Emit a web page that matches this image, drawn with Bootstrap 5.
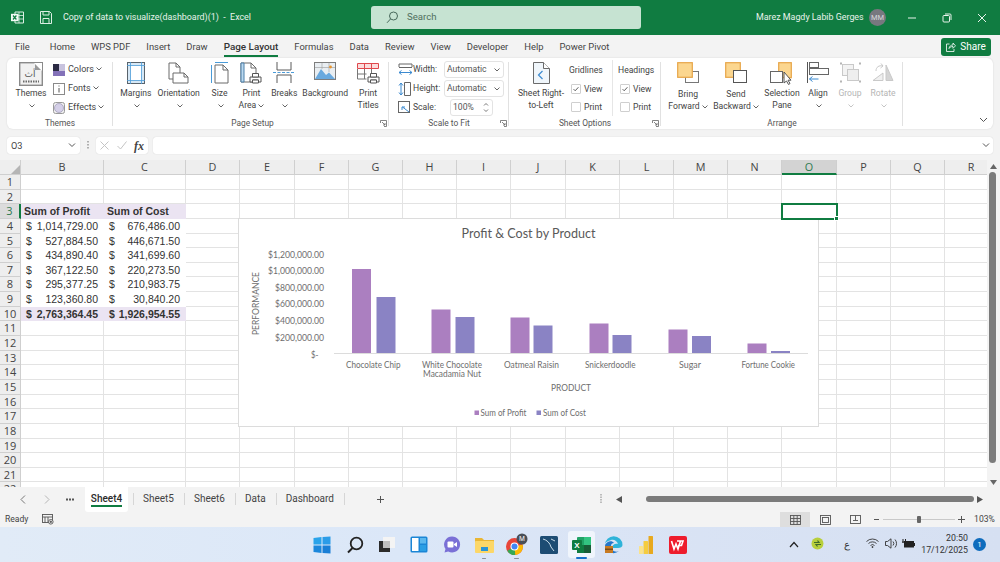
<!DOCTYPE html>
<html lang="en">
<head>
<meta charset="UTF-8" />
<meta name="viewport" content="width=device-width, initial-scale=1" />
<title>Copy of data to visualize(dashboard)(1) - Excel</title>
<link href="https://cdn.jsdelivr.net/npm/bootstrap@5.3.0/dist/css/bootstrap.min.css" rel="stylesheet" />
<style>
  html, body { height: 100%; margin: 0; overflow: hidden; }
  body { width: 1000px; height: 562px; background: #f3f3f3; font-family: Roboto, "Noto Sans", sans-serif; font-size: 8.6px; color: #444; }
  svg { display: block; flex: none; }

  /* title bar */
  .title-bar { height: 35px; background: #107c41; color: #e8f3ec; font-size: 8.9px; flex: none; }
  .title-app { margin-left: 11px; }
  .title-save { margin-left: 16px; }
  .title-name { margin-left: 11px; width: 308px; white-space: nowrap; }
  .title-search { width: 270px; height: 23px; background: #c6e3d2; border-radius: 3px; color: #4f6f5d; font-size: 9.6px; padding-left: 15px; gap: 8px; }
  .title-user { margin-left: 115px; width: 104px; white-space: nowrap; }
  .title-avatar { width: 17px; height: 17px; border-radius: 50%; background: #77787f; color: #d8d8dc; font-size: 7.5px; margin-left: 9px; }
  .title-ctrl { width: 35px; margin-left: 0; }
  .title-ctrl.first { margin-left: 8px; }

  /* menu row */
  .menu-row { height: 23px; flex: none; padding-left: 15px; gap: 16px; color: #444; font-size: 9.4px; position: relative; }
  .menu-tab { color: #444; text-decoration: none; line-height: 21px; height: 21px; white-space: nowrap; }
  .menu-tab.active { color: #333; font-size: 9.9px; font-weight: 500; border-bottom: 2px solid #107c41; }
  .menu-share { margin-left: auto; margin-right: 9px; width: 50px; height: 18px; background: #107c41; color: #fff; border-radius: 3px; font-size: 10px; padding: 0; gap: 4px; border: 0; }
  .menu-share:hover { background: #107c41; color: #fff; }

  /* ribbon */
  .ribbon-box { height: 71px; margin: 0 7px; background: #fff; border-radius: 6px; padding-top: 2px; flex: none; box-shadow: 0 0 2px rgba(0,0,0,.12); position: relative; }
  .rb-group { height: 69px; position: relative; flex: none; }
  .rb-group::after { content: ""; position: absolute; right: 0; top: 2px; bottom: 3px; width: 1px; background: #e1e1e1; }
  .rb-body { height: 57px; }
  .rb-label { height: 12px; line-height: 12px; text-align: center; color: #555; font-size: 8.4px; white-space: nowrap; }
  .rb-launch { position: absolute; right: 2px; bottom: 2px; }
  .grp-themes { width: 106px; }
  .grp-page { width: 276px; padding-left: 3px; }
  .grp-scale { width: 120px; }
  .grp-sheet { width: 152px; }
  .grp-arrange { width: 242px; }
  .rb-big { padding-top: 2px; line-height: 12px; text-align: center; white-space: nowrap; color: #444; }
  .rb-big .rb-icon { height: 24px; margin-bottom: 1px; }
  .rb-big.lower .rb-icon { margin-bottom: 2px; }
  .rb-off { color: #b5b5b5; }
  .bw-28 { width: 28px; } .bw-30 { width: 30px; } .bw-36 { width: 36px; } .bw-38 { width: 38px; } .bw-40 { width: 40px; }
  .bw-42 { width: 42px; } .bw-44 { width: 44px; } .bw-46 { width: 46px; } .bw-48 { width: 48px; }
  .rb-lead { margin-left: 7px; width: 34px; }
  .rb-small-col { margin-left: 5px; }
  .rb-small { height: 19px; gap: 3px; white-space: nowrap; font-size: 9px; }
  .rb-chev { display: inline-block; vertical-align: middle; margin-left: 2px; }
  .rb-chev-line { height: 12px; }
  .scale-col { padding-left: 9px; }
  .scale-row { height: 19px; gap: 0; white-space: nowrap; }
  .scale-name { width: 31px; }
  .scale-ico { width: 15px; }
  .scale-box { width: 60px; height: 17px; border: 1px solid #e3e3e3; border-radius: 3px; padding: 0 3px 0 2px; color: #555; }
  .scale-pct { width: 43px; margin-left: 6px; padding-left: 2px; }
  .sheet-lead { margin-left: 7px; width: 50px; }
  .opt-col { padding-top: 1px; }
  .opt-col.c1 { width: 41px; margin-left: 5px; }
  .opt-col.c2 { width: 46px; height: 56px; padding-left: 7px; border-left: 1px solid #e6e6e6; }
  .opt-head { height: 19px; line-height: 19px; margin-left: -2px; white-space: nowrap; }
  .opt-row { height: 18px; gap: 3px; white-space: nowrap; }
  .opt-row .form-check-input { width: 10px; height: 10px; margin: 0; border: 1px solid #cfcfcf; border-radius: 1px; background-color: #fff; box-shadow: none; flex: none; float: none; }
  .opt-row .form-check-input:checked { background-color: #fff; border-color: #cfcfcf; background-size: 8px; background-image: url("data:image/svg+xml,%3csvg xmlns='http://www.w3.org/2000/svg' viewBox='0 0 10 10'%3e%3cpath fill='none' stroke='%23555' stroke-width='1.2' d='M2 5.2l2 2 4-4.4'/%3e%3c/svg%3e"); }
  .opt-row label { margin: 0; }
  .arr-lead { margin-left: 3px; }
  .rb-collapse { position: absolute; right: 5px; bottom: 6px; }

  /* formula bar */
  .formula-row { height: 17px; margin: 8px 7px 6px; flex: none; }
  .fx-name { width: 73px; height: 17px; background: #fff; border-radius: 3px; padding: 0 4px; color: #444; font-size: 9.2px; box-shadow: 0 0 1px rgba(0,0,0,.2); }
  .fx-dots { width: 16px; }
  .fx-btns { width: 52px; height: 17px; background: #fff; border-radius: 3px; padding: 0 4px; box-shadow: 0 0 1px rgba(0,0,0,.2); }
  .fx-input { margin-left: 5px; height: 17px; background: #fff; border-radius: 3px; flex: 1; padding-right: 3px; box-shadow: 0 0 1px rgba(0,0,0,.2); }
  .fx-sym { font-family: "Liberation Serif", serif; font-style: italic; font-size: 12px; color: #444; font-weight: 700; }

  /* sheet */
  .sheet-wrap { height: 327px; flex: none; position: relative; overflow: hidden; }
  .sheet-grid { display: grid; width: 998px; background: #fff; font-family: "Liberation Sans", Arial, sans-serif; font-size: 10.5px; color: #333;
    grid-template-columns: 21px 83px 82px 54px 55px 54px 54px 54px 54px 55px 54px 54px 54px 54px 55px 54px 54px 53px;
    grid-template-rows: 15px; grid-auto-rows: 14.65px; }
  .cel { border-right: 1px solid #e3e3e3; border-bottom: 1px solid #e3e3e3; position: relative; line-height: 15px; white-space: nowrap; }
  .cel-head { background: #eee; border-color: #cfcfcf; text-align: center; color: #444; font-family: "Open Sans", sans-serif; font-size: 10.8px; line-height: 14px; }
  .cel-head.row-no { font-size: 11px; color: #444; line-height: 14px; }
  .cel-head.on { background: #d3d3d3; color: #2f7a50; border-bottom: 2px solid #107c41; }
  .cel-head.row-on { background: #dcdcdc; color: #2f7a50; border-bottom-color: #cfcfcf; border-right: 2px solid #107c41; }
  .cel-corner { background: #eee; border-right: 1px solid #cfcfcf; border-bottom: 1px solid #cfcfcf; }
  .cel-pivot { background: #ebe4f2; font-weight: 700; border-color: #ebe4f2; padding-left: 3px; }
  .cel-acc { border-color: #fff; padding: 0 5px; }
  .cel-total { background: #ebe4f2; font-weight: 700; border-color: #ebe4f2; padding: 0 5px; }
  .cel-sel { outline: 2px solid #107c41; outline-offset: -1px; z-index: 3; }
  .cel-sel::after { content: ""; position: absolute; right: -3px; bottom: -3px; width: 5px; height: 5px; background: #107c41; border: 1px solid #fff; }
  .chart-box { position: absolute; left: 238px; top: 58px; width: 581px; height: 209px; background: #fff; border: 1px solid #dcdcdc; z-index: 2; }
  .chart-box text { font-family: Lato, "Open Sans", sans-serif; fill: #6e6e6e; font-size: 9.4px; }
  .chart-box text.ch-title { font-size: 13.5px; fill: #595959; }
  .chart-box text.ch-axis { font-size: 10px; }
  .vscroll { position: absolute; right: 0; top: 0; width: 13px; height: 327px; background: #f3f3f3; }
  .vscroll-up { position: absolute; left: 3px; top: 4px; }
  .vscroll-thumb { position: absolute; left: 2px; top: 12px; width: 7px; height: 291px; background: #7b7b7b; border-radius: 4px; }
  .vscroll-down { position: absolute; left: 3px; top: 320px; }

  /* sheet tabs */
  .tabs-row { height: 25px; flex: none; background: #f3f3f3; color: #444; font-size: 10px; position: relative; }
  .tab-nav { width: 24px; }
  .tab-nav.first { margin-left: 11px; }
  .tab-dots { width: 22px; }
  .tab-sheet { height: 25px; line-height: 24px; padding: 0 10px; white-space: nowrap; position: relative; }
  .tab-sheet + .tab-sheet::before { content: ""; position: absolute; left: 0; top: 6px; height: 12px; width: 1px; background: #d6d6d6; }
  .tab-on { background: #fff; font-weight: 500; color: #2b2b2b; padding: 0; margin: -1px 5px 0 4px; border-radius: 0 0 3px 3px; width: 43px; text-align: center; }
  .tab-on::after { content: ""; position: absolute; left: 6px; right: 6px; bottom: 5px; height: 2px; background: #107c41; }
  .tab-last { padding: 0; width: 1px; }
  .tab-plus { margin-left: 31px; }
  .hscroll { position: absolute; left: 598px; top: 0; right: 0; height: 25px; }
  .hscroll-thumb { position: absolute; left: 48px; top: 9px; width: 328px; height: 6px; border-radius: 3px; background: #7b7b7b; }
  .hs-dots { position: absolute; left: 2px; top: 7px; }
  .hs-left { position: absolute; left: 18px; top: 9px; }
  .hs-right { position: absolute; left: 379px; top: 9px; }

  /* status bar */
  .status-row { height: 15px; flex: none; background: #f3f3f3; border-top: 1px solid #e2e2e2; padding-left: 5px; font-size: 8.6px; color: #444; box-sizing: content-box; margin-top: -1px; }
  .status-macro { margin-left: 14px; }
  .status-view { width: 30px; height: 15px; }
  .status-view.on { background: #dedede; }
  .status-views { margin-left: auto; margin-right: 3px; }
  .status-zoom { width: 92px; gap: 3px; }
  .zoom-track { flex: 1; height: 1px; background: #c9c9c9; position: relative; }
  .zoom-thumb { position: absolute; left: 34px; top: -3px; width: 4px; height: 7px; background: #666; border-radius: 1px; }
  .status-pct { width: 35px; padding-left: 4px; text-align: center; font-size: 8.6px; }

  /* taskbar */
  .task-bar { height: 35px; flex: none; background: linear-gradient(90deg, #e1ebf7 0%, #dbe7f8 40%, #dae4f5 60%, #d6e0f2 100%); position: relative; }
  .task-apps { position: absolute; left: 0; top: 0; bottom: 0; width: 100%; padding-left: 306px; }
  .task-app { width: 32.4px; height: 35px; position: relative; }
  .task-app.on::before { content: ""; position: absolute; left: 3px; right: 3px; top: 4px; height: 27px; background: #f0f5fc; border-radius: 3px; }
  .task-app svg { position: relative; }
  .task-app.on::after { content: ""; position: absolute; left: 11px; right: 11px; bottom: 3px; height: 2px; background: #1670c9; border-radius: 1px; }
  .task-app.dot::after { content: ""; position: absolute; left: 14px; right: 14px; bottom: 3px; height: 1.5px; background: #8a8f98; border-radius: 1px; }
  .task-tray { position: absolute; left: 0; top: 0; bottom: 0; width: 100%; color: #333; }
  .tray-chev { position: absolute; left: 789px; top: 14px; }
  .tray-sync { position: absolute; left: 811px; top: 10px; }
  .tray-lang { position: absolute; left: 844px; top: 10px; font-size: 10px; }
  .tray-wifi { position: absolute; left: 866px; top: 11px; }
  .tray-vol { position: absolute; left: 885px; top: 11px; }
  .tray-bat { position: absolute; left: 902px; top: 12px; }
  .tray-clock { position: absolute; right: 32px; top: 5px; text-align: right; line-height: 12px; font-size: 8.8px; }
  .tray-badge { position: absolute; left: 973px; top: 11px; width: 13px; height: 13px; border-radius: 50%; background: #0f6cbd; color: #fff; font-size: 8px; line-height: 13px; text-align: center; }
</style>
</head>
<body class="d-flex flex-column">

  <!-- title bar -->
  <header class="title-bar d-flex align-items-center">
    <svg class="title-app" width="13" height="13" viewBox="0 0 13 13"><path d="M4 1h8.500v11H4z" fill="none" stroke="#dcefe4"/><path d="M8 1v11M4 4.500h8.500M4 8h8.500" stroke="#dcefe4" stroke-width=".8"/><path d="M0 2.800h7.500v7.400H0z" fill="#f4faf6"/><path d="M2 4.500l3.400 4M5.400 4.500L2 8.500" stroke="#107c41" stroke-width="1.200"/></svg>
    <svg class="title-save" width="12" height="13" viewBox="0 0 12 13" fill="none" stroke="#dcefe4"><path d="M.5.500h9l2 2v10h-11z"/><path d="M3 .500v3.500h6V.500M3 12.500V7.500h6v5"/></svg>
    <div class="title-name">Copy of data to visualize(dashboard)(1)&nbsp; -&nbsp; Excel</div>
    <div class="title-search d-flex align-items-center">
      <svg width="13" height="13" viewBox="0 0 13 13" fill="none" stroke="#47685a" stroke-width="1"><circle cx="7.500" cy="5" r="4"/><path d="M4.500 8l-3.500 3.800"/></svg>
      <span>Search</span>
    </div>
    <div class="title-user">Marez Magdy Labib Gerges</div>
    <div class="title-avatar d-flex align-items-center justify-content-center">MM</div>
    <div class="title-ctrl first d-flex justify-content-center"><svg width="10" height="10" viewBox="0 0 10 10"><path d="M1 5h8" stroke="#e8f3ec"/></svg></div>
    <div class="title-ctrl d-flex justify-content-center"><svg width="10" height="10" viewBox="0 0 10 10" fill="none" stroke="#e8f3ec"><rect x="1" y="2.500" width="6.500" height="6.500" rx="1"/><path d="M3 1h5a1 1 0 0 1 1 1v5"/></svg></div>
    <div class="title-ctrl d-flex justify-content-center"><svg width="10" height="10" viewBox="0 0 10 10"><path d="M1 1l8 8M9 1l-8 8" stroke="#e8f3ec"/></svg></div>
  </header>

  <!-- menu tabs -->
  <nav class="menu-row d-flex align-items-center">
    <a class="menu-tab me-1" href="#">File</a>
    <a class="menu-tab" href="#">Home</a>
    <a class="menu-tab" href="#">WPS PDF</a>
    <a class="menu-tab" href="#">Insert</a>
    <a class="menu-tab" href="#">Draw</a>
    <a class="menu-tab active" href="#">Page Layout</a>
    <a class="menu-tab" href="#">Formulas</a>
    <a class="menu-tab" href="#">Data</a>
    <a class="menu-tab" href="#">Review</a>
    <a class="menu-tab" href="#">View</a>
    <a class="menu-tab" href="#">Developer</a>
    <a class="menu-tab" href="#">Help</a>
    <a class="menu-tab" href="#">Power Pivot</a>
    <button type="button" class="btn menu-share d-flex align-items-center justify-content-center">
      <svg width="10" height="10" viewBox="0 0 10 10" fill="none" stroke="#fff" stroke-width=".8"><path d="M3.500 2H.5v7.500h7.500V7"/><path d="M3 6.500C3.500 4 5 3 7 3V1l2.500 2.800L7 6.300V4.500C5 4.500 4 5.200 3 6.500z"/></svg>
      <span>Share</span>
    </button>
  </nav>

  <!-- ribbon -->
  <section class="ribbon-box d-flex">
    <div class="rb-group grp-themes">
      <div class="rb-body d-flex">
        <div class="rb-big rb-lead d-flex flex-column align-items-center">
          <div class="rb-icon">
            <svg width="24" height="24" viewBox="0 0 24 24"><rect x=".7" y=".7" width="22.600" height="22.600" fill="#f1f1f1" stroke="#8a8a8a" stroke-width="1.400"/><path d="M15 1h8v8z" fill="#fff"/><path d="M16 2l6 6h-6z" fill="#9a9a9a"/><text x="11" y="15" font-size="9" fill="#555" text-anchor="middle" font-family="DejaVu Sans">أث</text><path d="M4 19.500h16" stroke="#6a6a6a" stroke-width="2" stroke-dasharray="1.500 1"/></svg>
          </div>
          <div>Themes</div>
          <div class="rb-chev-line"><svg class="rb-chev" width="6" height="4" viewBox="0 0 6 4"><path d="M.5.500L3 3 5.500.500" fill="none" stroke="#666"/></svg></div>
        </div>
        <div class="rb-small-col">
          <div class="rb-small d-flex align-items-center">
            <svg width="12" height="12" viewBox="0 0 12 12"><rect width="6" height="7" fill="#2c2c44"/><rect x="6" width="6" height="7" fill="#c8c3de"/><rect y="7" width="12" height="5" fill="#8371b8"/></svg>
            <span>Colors<svg class="rb-chev d-inline" width="6" height="4" viewBox="0 0 6 4"><path d="M.5.500L3 3 5.500.500" fill="none" stroke="#666"/></svg></span>
          </div>
          <div class="rb-small d-flex align-items-center">
            <svg width="12" height="12" viewBox="0 0 12 12" fill="none" stroke="#8a8a8a"><rect x=".5" y=".5" width="11" height="11"/><path d="M6 2.500v1M6 5v4.500" stroke="#555"/></svg>
            <span>Fonts<svg class="rb-chev d-inline" width="6" height="4" viewBox="0 0 6 4"><path d="M.5.500L3 3 5.500.500" fill="none" stroke="#666"/></svg></span>
          </div>
          <div class="rb-small d-flex align-items-center">
            <svg width="12" height="12" viewBox="0 0 12 12"><rect x=".5" y=".5" width="11" height="11" rx="2" fill="#efefef" stroke="#9a9a9a"/><circle cx="6" cy="6" r="4.500" fill="#d4cfe8" stroke="#9c98b4" stroke-width=".7"/></svg>
            <span>Effects<svg class="rb-chev d-inline" width="6" height="4" viewBox="0 0 6 4"><path d="M.5.500L3 3 5.500.500" fill="none" stroke="#666"/></svg></span>
          </div>
        </div>
      </div>
      <div class="rb-label">Themes</div>
    </div>

    <div class="rb-group grp-page">
      <div class="rb-body d-flex">
        <div class="rb-big bw-40 d-flex flex-column align-items-center">
          <div class="rb-icon"><svg width="18" height="22" viewBox="0 0 18 22"><rect x=".5" y=".5" width="17" height="21" fill="#d6e8f6" stroke="#59636b"/><rect x="3.500" y="3.500" width="11" height="15" fill="#fff"/><path d="M3.500 0v22M14.500 0v22M0 3.500h18M0 18.500h18" stroke="#4a9bd8" stroke-width=".8"/></svg></div>
          <div>Margins</div>
          <div class="rb-chev-line"><svg class="rb-chev" width="6" height="4" viewBox="0 0 6 4"><path d="M.5.500L3 3 5.500.500" fill="none" stroke="#666"/></svg></div>
        </div>
        <div class="rb-big bw-46 d-flex flex-column align-items-center">
          <div class="rb-icon"><svg width="22" height="22" viewBox="0 0 22 22" fill="#fff" stroke="#6b6b6b"><path d="M1 1h7l4 4v12H1z"/><path d="M8 1v4h4" fill="none"/><path d="M5 11h11l4 4v6H5z"/><path d="M16 11v4h4" fill="none"/></svg></div>
          <div>Orientation</div>
          <div class="rb-chev-line"><svg class="rb-chev" width="6" height="4" viewBox="0 0 6 4"><path d="M.5.500L3 3 5.500.500" fill="none" stroke="#666"/></svg></div>
        </div>
        <div class="rb-big bw-36 d-flex flex-column align-items-center">
          <div class="rb-icon"><svg width="18" height="22" viewBox="0 0 18 22" fill="none"><path d="M4 3h8l5 5v13H4z" fill="#fff" stroke="#6b6b6b"/><path d="M12 3v5h5" stroke="#6b6b6b"/><path d="M.5 3v18M4 .5h13" stroke="#4a9bd8"/></svg></div>
          <div>Size</div>
          <div class="rb-chev-line"><svg class="rb-chev" width="6" height="4" viewBox="0 0 6 4"><path d="M.5.500L3 3 5.500.500" fill="none" stroke="#666"/></svg></div>
        </div>
        <div class="rb-big bw-28 d-flex flex-column align-items-center">
          <div class="rb-icon"><svg width="22" height="22" viewBox="0 0 22 22" fill="none"><path d="M1 1h10l5 5v14H1z" fill="#fff" stroke="#6b6b6b"/><path d="M1 1h3v19H1z" fill="#bcd9ef" stroke="#4a7fa8"/><path d="M11 1v5h5" stroke="#6b6b6b"/><path d="M10 15h11v5h-2.500v-2h-6v2H10z" fill="#fff" stroke="#555"/><path d="M12.500 11.500h6V15h-6zM12.500 18h6v3h-6z" fill="#fff" stroke="#555"/></svg></div>
          <div>Print</div>
          <div>Area<svg class="rb-chev d-inline" width="6" height="4" viewBox="0 0 6 4"><path d="M.5.500L3 3 5.500.500" fill="none" stroke="#666"/></svg></div>
        </div>
        <div class="rb-big bw-38 d-flex flex-column align-items-center">
          <div class="rb-icon"><svg width="22" height="22" viewBox="0 0 22 22" fill="none"><path d="M4 0v8h14V0M4 21v-8h14v8" stroke="#5b5b5b"/><path d="M0 10.500h22" stroke="#4a9bd8" stroke-dasharray="3 1.500"/></svg></div>
          <div>Breaks</div>
          <div class="rb-chev-line"><svg class="rb-chev" width="6" height="4" viewBox="0 0 6 4"><path d="M.5.500L3 3 5.500.500" fill="none" stroke="#666"/></svg></div>
        </div>
        <div class="rb-big bw-44 d-flex flex-column align-items-center">
          <div class="rb-icon"><svg width="22" height="19" viewBox="0 0 22 19"><rect x=".5" y=".5" width="21" height="17" fill="#e9eef2" stroke="#7d7d7d"/><path d="M1 17l6-10 5 6 3-2.500 6 6.500z" fill="#69a9de"/><path d="M1 5.500h20M8 1v6M15 1v9" stroke="#9a9a9a" stroke-width=".6"/><circle cx="16.500" cy="5" r="1.400" fill="#e9942c"/></svg></div>
          <div>Background</div>
        </div>
        <div class="rb-big bw-42 d-flex flex-column align-items-center">
          <div class="rb-icon"><svg width="23" height="22" viewBox="0 0 23 22" fill="none"><path d="M.5 1.500h21v5H.5z" fill="#fbdcdc" stroke="#e0474c"/><path d="M7.500 1.500v5M14.500 1.500v5" stroke="#e0474c"/><path d="M.5 7v10h9M.5 12h9M7.500 7v10M14.500 7v4" stroke="#777"/><path d="M11 15h11v5h-2.500v-2h-6v2H11z" fill="#fff" stroke="#555"/><path d="M13.500 11.500h6V15h-6zM13.500 18h6v3h-6z" fill="#fff" stroke="#555"/></svg></div>
          <div>Print</div>
          <div>Titles</div>
        </div>
      </div>
      <div class="rb-label">Page Setup</div>
      <svg class="rb-launch" width="7" height="7" viewBox="0 0 7 7" fill="none" stroke="#666" stroke-width=".8"><path d="M.5 3V.5h6v6H4M2 2l3 3M5 3v2H3"/></svg>
    </div>

    <div class="rb-group grp-scale">
      <div class="rb-body scale-col">
        <div class="scale-row d-flex align-items-center">
          <svg class="scale-ico" width="15" height="13" viewBox="0 0 15 13" fill="none"><path d="M1 4V1h13v3" stroke="#666"/><path d="M1 4.500h13" stroke="#666"/><path d="M1 9.500h13M1 9.500l2.500-2M1 9.500l2.500 2M14 9.500l-2.500-2M14 9.500l-2.500 2" stroke="#3b8ad0"/></svg>
          <span class="scale-name">Width:</span>
          <div class="scale-box d-flex align-items-center justify-content-between"><span>Automatic</span><svg width="6" height="4" viewBox="0 0 6 4"><path d="M.5.500L3 3 5.500.500" fill="none" stroke="#666"/></svg></div>
        </div>
        <div class="scale-row d-flex align-items-center">
          <svg class="scale-ico" width="15" height="14" viewBox="0 0 15 14" fill="none"><path d="M6.500.5h6v13h-6" stroke="#666"/><path d="M6.500.5v13" stroke="#666"/><path d="M3 1v12M3 1L1 3.500M3 1l2 2.500M3 13l-2-2.500M3 13l2-2.500" stroke="#3b8ad0"/></svg>
          <span class="scale-name">Height:</span>
          <div class="scale-box d-flex align-items-center justify-content-between"><span>Automatic</span><svg width="6" height="4" viewBox="0 0 6 4"><path d="M.5.500L3 3 5.500.500" fill="none" stroke="#666"/></svg></div>
        </div>
        <div class="scale-row d-flex align-items-center">
          <svg class="scale-ico" width="15" height="13" viewBox="0 0 15 13" fill="none"><rect x=".5" y=".5" width="11" height="11" stroke="#666"/><path d="M11 11L4.500 6M4 9V6h3" stroke="#3b8ad0"/></svg>
          <span class="scale-name">Scale:</span>
          <div class="scale-box scale-pct d-flex align-items-center justify-content-between"><span>100%</span><svg width="6" height="11" viewBox="0 0 6 11"><path d="M1 3.500L3 1.500l2 2M1 7.500l2 2 2-2" fill="none" stroke="#555" stroke-width=".8"/></svg></div>
        </div>
      </div>
      <div class="rb-label">Scale to Fit</div>
      <svg class="rb-launch" width="7" height="7" viewBox="0 0 7 7" fill="none" stroke="#666" stroke-width=".8"><path d="M.5 3V.5h6v6H4M2 2l3 3M5 3v2H3"/></svg>
    </div>

    <div class="rb-group grp-sheet">
      <div class="rb-body d-flex">
        <div class="rb-big sheet-lead d-flex flex-column align-items-center">
          <div class="rb-icon"><svg width="17" height="22" viewBox="0 0 17 22"><path d="M.5.500h10l6 6v15H.5z" fill="#f0f6fb" stroke="#6b6b6b"/><path d="M10.500.500v6h6" fill="#fff" stroke="#6b6b6b"/><path d="M9.500 9L5.500 13l4 4" fill="none" stroke="#3b8ad0" stroke-width="1.200"/></svg></div>
          <div>Sheet Right-</div>
          <div>to-Left</div>
        </div>
        <div class="opt-col c1">
          <div class="opt-head">Gridlines</div>
          <div class="opt-row d-flex align-items-center"><input class="form-check-input" type="checkbox" id="grid-view" checked /><label for="grid-view">View</label></div>
          <div class="opt-row d-flex align-items-center"><input class="form-check-input" type="checkbox" id="grid-print" /><label for="grid-print">Print</label></div>
        </div>
        <div class="opt-col c2">
          <div class="opt-head">Headings</div>
          <div class="opt-row d-flex align-items-center"><input class="form-check-input" type="checkbox" id="head-view" checked /><label for="head-view">View</label></div>
          <div class="opt-row d-flex align-items-center"><input class="form-check-input" type="checkbox" id="head-print" /><label for="head-print">Print</label></div>
        </div>
      </div>
      <div class="rb-label">Sheet Options</div>
      <svg class="rb-launch" width="7" height="7" viewBox="0 0 7 7" fill="none" stroke="#666" stroke-width=".8"><path d="M.5 3V.5h6v6H4M2 2l3 3M5 3v2H3"/></svg>
    </div>

    <div class="rb-group grp-arrange">
      <div class="rb-body d-flex arr-lead">
        <div class="rb-big lower bw-48 d-flex flex-column align-items-center">
          <div class="rb-icon"><svg width="22" height="21" viewBox="0 0 22 21"><rect x="8.500" y="9.500" width="13" height="11" fill="#fff" stroke="#777"/><rect x=".7" y=".7" width="14.600" height="14.600" fill="#fbd68f" stroke="#e7a548" stroke-width="1.200"/></svg></div>
          <div>Bring</div>
          <div>Forward<svg class="rb-chev d-inline" width="6" height="4" viewBox="0 0 6 4"><path d="M.5.500L3 3 5.500.500" fill="none" stroke="#666"/></svg></div>
        </div>
        <div class="rb-big lower bw-48 d-flex flex-column align-items-center">
          <div class="rb-icon"><svg width="22" height="21" viewBox="0 0 22 21"><rect x=".7" y=".7" width="14.600" height="14.600" fill="#fbd68f" stroke="#e7a548" stroke-width="1.200"/><rect x="8.500" y="8.500" width="13" height="12" fill="#fff" stroke="#555"/></svg></div>
          <div>Send</div>
          <div>Backward<svg class="rb-chev d-inline" width="6" height="4" viewBox="0 0 6 4"><path d="M.5.500L3 3 5.500.500" fill="none" stroke="#666"/></svg></div>
        </div>
        <div class="rb-big bw-44 d-flex flex-column align-items-center">
          <div class="rb-icon"><svg width="24" height="23" viewBox="0 0 24 23"><rect x="8.700" y=".7" width="12.600" height="15" fill="#fbd68f" stroke="#e7a548" stroke-width="1.200"/><rect x=".5" y="9.500" width="12" height="11" fill="#fff" stroke="#666"/><path d="M14 10v11l2.500-2 2 3.500 1.500-1-2-3.300h3z" fill="#fff" stroke="#555"/></svg></div>
          <div>Selection</div>
          <div>Pane</div>
        </div>
        <div class="rb-big bw-28 d-flex flex-column align-items-center">
          <div class="rb-icon"><svg width="22" height="21" viewBox="0 0 22 21" fill="none"><path d="M.5 0v21" stroke="#555"/><rect x="2.500" y=".5" width="9" height="5" stroke="#666"/><rect x="2.500" y="6.500" width="19" height="6" stroke="#666"/><path d="M2.500 17h9M2.500 17l3-2.500M2.500 17l3 2.500" stroke="#3b8ad0"/></svg></div>
          <div>Align</div>
          <div class="rb-chev-line"><svg class="rb-chev" width="6" height="4" viewBox="0 0 6 4"><path d="M.5.500L3 3 5.500.500" fill="none" stroke="#666"/></svg></div>
        </div>
        <div class="rb-big rb-off bw-36 d-flex flex-column align-items-center">
          <div class="rb-icon"><svg width="21" height="21" viewBox="0 0 21 21" fill="none" stroke="#c9c9c9"><rect x="2.500" y="2.500" width="11" height="11" fill="#f3f3f3"/><rect x="7.500" y="7.500" width="11" height="11" fill="#eee"/><path d="M0 1.500h2M19 1.500h2M0 19.500h2M19 19.500h2" stroke="#b5b5b5" stroke-width="2"/></svg></div>
          <div>Group</div>
          <div class="rb-chev-line"><svg class="rb-chev" width="6" height="4" viewBox="0 0 6 4"><path d="M.5.500L3 3 5.500.500" fill="none" stroke="#c5c5c5"/></svg></div>
        </div>
        <div class="rb-big rb-off bw-30 d-flex flex-column align-items-center">
          <div class="rb-icon"><svg width="22" height="21" viewBox="0 0 22 21" fill="none" stroke="#c9c9c9"><path d="M1 18.500L11 11v7.500z" fill="#f0f0f0"/><path d="M14 3l7 15.500h-7z" fill="#d5d5d5"/><path d="M4 9c0-4 3-6 7-5M9 1.500L11 4 8.500 6" /></svg></div>
          <div>Rotate</div>
          <div class="rb-chev-line"><svg class="rb-chev" width="6" height="4" viewBox="0 0 6 4"><path d="M.5.500L3 3 5.500.500" fill="none" stroke="#c5c5c5"/></svg></div>
        </div>
      </div>
      <div class="rb-label">Arrange</div>
    </div>
    <svg class="rb-collapse" width="9" height="6" viewBox="0 0 9 6"><path d="M1 1l3.500 3.500L8 1" fill="none" stroke="#555"/></svg>
  </section>

  <!-- formula bar -->
  <div class="formula-row d-flex align-items-center">
    <div class="fx-name d-flex align-items-center justify-content-between"><span>O3</span><svg width="8" height="5" viewBox="0 0 8 5"><path d="M1 .500l3 3 3-3" fill="none" stroke="#555"/></svg></div>
    <div class="fx-dots d-flex justify-content-center"><svg width="2" height="9" viewBox="0 0 2 9"><path d="M1 0v9" stroke="#999" stroke-width="1.500" stroke-dasharray="1.500 1.500"/></svg></div>
    <div class="fx-btns d-flex align-items-center justify-content-between">
      <svg width="9" height="9" viewBox="0 0 9 9"><path d="M.5.500l8 8M8.500.500l-8 8" stroke="#c4c4c4"/></svg>
      <svg width="10" height="9" viewBox="0 0 10 9"><path d="M.5 5l3 3L9.500.500" fill="none" stroke="#c4c4c4"/></svg>
      <span class="fx-sym">fx</span>
    </div>
    <div class="fx-input d-flex align-items-center justify-content-end"><svg width="8" height="5" viewBox="0 0 8 5"><path d="M1 .500l3 3 3-3" fill="none" stroke="#555"/></svg></div>
  </div>

  <!-- sheet -->
  <div class="sheet-wrap">
    <div class="sheet-grid" id="sheetGrid"></div>

    <div class="chart-box">
      <svg width="579" height="207" viewBox="239 219 579 207">
        <text class="ch-title" x="461.500" y="238" textLength="134" lengthAdjust="spacingAndGlyphs">Profit &amp; Cost by Product</text>
        <text x="268" y="257.500" textLength="56" lengthAdjust="spacingAndGlyphs">$1,200,000.00</text>
        <text x="268" y="273.500" textLength="56" lengthAdjust="spacingAndGlyphs">$1,000,000.00</text>
        <text x="275" y="290.500" textLength="49" lengthAdjust="spacingAndGlyphs">$800,000.00</text>
        <text x="275" y="307" textLength="49" lengthAdjust="spacingAndGlyphs">$600,000.00</text>
        <text x="275" y="324" textLength="49" lengthAdjust="spacingAndGlyphs">$400,000.00</text>
        <text x="275" y="340.500" textLength="49" lengthAdjust="spacingAndGlyphs">$200,000.00</text>
        <text x="311" y="357.500" textLength="7.500" lengthAdjust="spacingAndGlyphs">$-</text>
        <text class="ch-axis" transform="translate(259 335) rotate(-90)" textLength="63" lengthAdjust="spacingAndGlyphs">PERFORMANCE</text>
        <path d="M334 353.500H808" stroke="#dcdcdc" />
        <g id="chartBars"></g>
        <text x="346" y="367.500" textLength="54.500" lengthAdjust="spacingAndGlyphs">Chocolate Chip</text>
        <text x="422" y="367.500" textLength="60" lengthAdjust="spacingAndGlyphs">White Chocolate</text>
        <text x="423" y="377" textLength="58" lengthAdjust="spacingAndGlyphs">Macadamia Nut</text>
        <text x="504" y="367.500" textLength="55" lengthAdjust="spacingAndGlyphs">Oatmeal Raisin</text>
        <text x="585" y="367.500" textLength="50.500" lengthAdjust="spacingAndGlyphs">Snickerdoodle</text>
        <text x="679" y="367.500" textLength="22" lengthAdjust="spacingAndGlyphs">Sugar</text>
        <text x="741.500" y="367.500" textLength="53.500" lengthAdjust="spacingAndGlyphs">Fortune Cookie</text>
        <text class="ch-axis" x="551" y="391" textLength="40" lengthAdjust="spacingAndGlyphs">PRODUCT</text>
        <rect x="474.500" y="410.500" width="4.500" height="4.500" fill="#ab7fc0" />
        <text x="480.500" y="416" textLength="46" lengthAdjust="spacingAndGlyphs">Sum of Profit</text>
        <rect x="536.500" y="410.500" width="4.500" height="4.500" fill="#8a83c4" />
        <text x="543" y="416" textLength="43" lengthAdjust="spacingAndGlyphs">Sum of Cost</text>
      </svg>
    </div>

    <div class="vscroll">
      <svg class="vscroll-up" width="7" height="5" viewBox="0 0 7 5"><path d="M3.500 0L7 5H0z" fill="#666"/></svg>
      <div class="vscroll-thumb"></div>
      <svg class="vscroll-down" width="7" height="5" viewBox="0 0 7 5"><path d="M0 0h7L3.500 5z" fill="#666"/></svg>
    </div>
  </div>

  <!-- sheet tabs -->
  <div class="tabs-row d-flex align-items-center">
    <div class="tab-nav first d-flex justify-content-center"><svg width="6" height="9" viewBox="0 0 6 9"><path d="M5 .500L1 4.500l4 4" fill="none" stroke="#777"/></svg></div>
    <div class="tab-nav d-flex justify-content-center"><svg width="6" height="9" viewBox="0 0 6 9"><path d="M1 .500l4 4-4 4" fill="none" stroke="#b5b5b5"/></svg></div>
    <div class="tab-dots d-flex justify-content-center"><svg width="8" height="3" viewBox="0 0 8 3"><path d="M0 1.500h8" stroke="#555" stroke-width="2" stroke-dasharray="2 1"/></svg></div>
    <div class="tab-sheet tab-on">Sheet4</div>
    <div class="tab-sheet">Sheet5</div>
    <div class="tab-sheet">Sheet6</div>
    <div class="tab-sheet">Data</div>
    <div class="tab-sheet">Dashboard</div>
    <div class="tab-sheet tab-last"></div>
    <svg class="tab-plus" width="9" height="9" viewBox="0 0 9 9"><path d="M4.500 1v7M1 4.500h7" stroke="#555"/></svg>
    <div class="hscroll">
      <svg class="hs-dots" width="2" height="10" viewBox="0 0 2 10"><path d="M1 0v10" stroke="#aaa" stroke-width="1.500" stroke-dasharray="1.500 1"/></svg>
      <svg class="hs-left" width="6" height="7" viewBox="0 0 6 7"><path d="M6 0v7L0 3.500z" fill="#555"/></svg>
      <div class="hscroll-thumb"></div>
      <svg class="hs-right" width="6" height="7" viewBox="0 0 6 7"><path d="M0 0v7l6-3.500z" fill="#555"/></svg>
    </div>
  </div>

  <!-- status bar -->
  <div class="status-row d-flex align-items-center">
    <span>Ready</span>
    <svg class="status-macro" width="12" height="11" viewBox="0 0 12 11" fill="none" stroke="#555" stroke-width=".9"><rect x=".5" y=".5" width="10" height="8"/><path d="M.5 3h10M3 3v5.500M6 3v5.500"/><circle cx="8.800" cy="7.800" r="2.300" fill="#fff"/><circle cx="8.800" cy="7.800" r=".8" fill="#555"/></svg>
    <div class="status-views d-flex">
      <div class="status-view on d-flex align-items-center justify-content-center"><svg width="11" height="10" viewBox="0 0 11 10" fill="none" stroke="#555" stroke-width=".9"><rect x=".5" y=".5" width="10" height="9"/><path d="M3.800.5v9M7.200.5v9M.5 3.500h10M.5 6.500h10"/></svg></div>
      <div class="status-view d-flex align-items-center justify-content-center"><svg width="11" height="10" viewBox="0 0 11 10" fill="none" stroke="#555" stroke-width=".9"><rect x=".5" y=".5" width="10" height="9"/><rect x="2.500" y="2.500" width="6" height="5"/></svg></div>
      <div class="status-view d-flex align-items-center justify-content-center"><svg width="11" height="10" viewBox="0 0 11 10" fill="none" stroke="#555" stroke-width=".9"><rect x=".5" y=".5" width="10" height="8"/><path d="M5.500 5.500V.5"/><path d="M3 5.500h5" /></svg></div>
    </div>
    <div class="status-zoom d-flex align-items-center">
      <svg width="7" height="7" viewBox="0 0 7 7"><path d="M1 3.500h5" stroke="#555"/></svg>
      <div class="zoom-track"><div class="zoom-thumb"></div></div>
      <svg width="7" height="7" viewBox="0 0 7 7"><path d="M0 3.500h7M3.500 0v7" stroke="#555"/></svg>
    </div>
    <div class="status-pct">103%</div>
  </div>

  <!-- windows taskbar -->
  <footer class="task-bar">
    <div class="task-apps d-flex align-items-center">
      <div class="task-app d-flex align-items-center justify-content-center"><svg width="18" height="18" viewBox="0 0 18 18"><path d="M.5 2l8-1v7.500h-8z" fill="#29a3ea"/><path d="M9.500 1l8-.5v8h-8z" fill="#2b9ce8"/><path d="M.5 9.500h8V17l-8-1z" fill="#1b87db"/><path d="M9.500 9.500h8v8l-8-.5z" fill="#1a7fd6"/></svg></div>
      <div class="task-app d-flex align-items-center justify-content-center"><svg width="18" height="18" viewBox="0 0 18 18" fill="none" stroke="#222" stroke-width="1.800"><circle cx="10.500" cy="7.500" r="5.800"/><path d="M6.500 12L2 16.500" stroke-width="2"/></svg></div>
      <div class="task-app d-flex align-items-center justify-content-center"><svg width="17" height="17" viewBox="0 0 17 17"><rect x="5" y="1" width="12" height="11" fill="#f4f4f4"/><rect x="1" y="5" width="11" height="11" fill="#2b2b2b"/><rect x="5" y="5" width="7" height="7" fill="#bfbfbf"/></svg></div>
      <div class="task-app d-flex align-items-center justify-content-center"><svg width="18" height="17" viewBox="0 0 18 17"><rect x=".5" y=".5" width="17" height="16" rx="1.500" fill="#1b86d6"/><rect x="2" y="2" width="6.500" height="13" fill="#fff"/><rect x="10" y="2" width="6" height="5.500" fill="#5cb8ee"/><rect x="10" y="9" width="6" height="6" fill="#2a9ee4"/></svg></div>
      <div class="task-app d-flex align-items-center justify-content-center"><svg width="18" height="17" viewBox="0 0 18 17"><path d="M9 .5a8 8 0 1 1-3.800 15L1.500 16.500l1-3.500A8 8 0 0 1 9 .5z" fill="#7a70d6"/><rect x="4.500" y="5.500" width="6" height="6" rx="1" fill="#fff"/><path d="M11 8l3-2v5l-3-2z" fill="#fff"/></svg></div>
      <div class="task-app dot d-flex align-items-center justify-content-center"><svg width="19" height="16" viewBox="0 0 19 16"><path d="M0 1h7l2 2h10v4H0z" fill="#e9b634"/><rect y="4" width="19" height="12" rx="1" fill="#fcd768"/><rect x="6" y="10" width="7" height="4" fill="#2a94d6"/></svg></div>
      <div class="task-app dot d-flex align-items-center justify-content-center"><svg width="24" height="24" viewBox="0 0 24 24"><circle cx="9.500" cy="13.500" r="8.500" fill="#e8453a"/><path d="M9.500 13.500L2.200 17.800a8.500 8.500 0 0 0 8.400 4.200z" fill="#36a853"/><path d="M9.500 13.500l.8 8.500a8.500 8.500 0 0 0 7.400-10.500z" fill="#fbbc04"/><circle cx="9.500" cy="13.500" r="4" fill="#fff"/><circle cx="9.500" cy="13.500" r="3" fill="#4285f4"/><circle cx="17" cy="6" r="5.500" fill="#4a4f57"/><text x="17" y="8.300" font-size="6.500" fill="#fff" text-anchor="middle" font-family="Noto Sans">M</text></svg></div>
      <div class="task-app d-flex align-items-center justify-content-center"><svg width="18" height="18" viewBox="0 0 18 18"><rect width="18" height="18" rx="1.500" fill="#1d4c73"/><path d="M3 3c4 1 7 4 8 8l3 4M11 3l4 2" fill="none" stroke="#c9dce9" stroke-width="1"/></svg></div>
      <div class="task-app on d-flex align-items-center justify-content-center"><svg width="19" height="18" viewBox="0 0 19 18"><rect x="5" y="1" width="14" height="16" rx="1" fill="#21a366"/><rect x="12" y="1" width="7" height="8" fill="#33c481"/><rect x="5" y="9" width="7" height="8" fill="#107c41"/><rect x="12" y="9" width="7" height="8" fill="#185c37"/><rect y="4" width="10" height="10" rx="1" fill="#107c41"/><text x="5" y="12" font-size="8" font-weight="700" fill="#fff" text-anchor="middle" font-family="Liberation Sans">X</text></svg></div>
      <div class="task-app d-flex align-items-center justify-content-center"><svg width="19" height="18" viewBox="0 0 19 18"><path d="M1 9a8.500 8.500 0 0 1 17.500 0c0 2-2 3-4.500 3H8c0-3 3-5 6-4-1-3-4-5-7-4S1 6 1 9z" fill="#2fb3d9"/><path d="M1 9c2-4 7-5 9-2-2 0-3 1-3 3 0 4 4 7 8 5a8.500 8.500 0 0 1-14-6z" fill="#2376c9"/><rect x="1" y="10" width="8" height="7" fill="#c77a22"/><rect x="1" y="12.500" width="8" height="1.500" fill="#7b4a14"/></svg></div>
      <div class="task-app d-flex align-items-center justify-content-center"><svg width="16" height="18" viewBox="0 0 16 18"><rect x="1" y="10" width="4" height="8" rx=".5" fill="#fbe38a"/><rect x="5.500" y="5" width="4.500" height="13" rx=".5" fill="#f5cc40"/><rect x="10.500" y="0" width="4.500" height="18" rx=".5" fill="#e8a91e"/></svg></div>
      <div class="task-app d-flex align-items-center justify-content-center"><svg width="18" height="18" viewBox="0 0 18 18"><rect width="18" height="18" rx="2" fill="#ee1c2c"/><path d="M2.500 5l2.500 8 2-5 2 5 2.500-8M8 5h6l-1.500 4.500H9" fill="none" stroke="#fff" stroke-width="1.600"/></svg></div>
    </div>
    <div class="task-tray">
      <svg class="tray-chev" width="10" height="7" viewBox="0 0 10 7"><path d="M1 6l4-4.500L9 6" fill="none" stroke="#222" stroke-width="1.200"/></svg>
      <svg class="tray-sync" width="13" height="13" viewBox="0 0 13 13"><circle cx="6.500" cy="6.500" r="6" fill="#b8cf3c"/><path d="M3 5.500h5l-1.500-2M10 7.500H5l1.500 2" fill="none" stroke="#3f6a2a" stroke-width="1.200"/></svg>
      <span class="tray-lang">ع</span>
      <svg class="tray-wifi" width="13" height="10" viewBox="0 0 13 10" fill="none" stroke="#333" stroke-width=".9"><path d="M.5 3.500a8.500 8.500 0 0 1 12 0M2.500 5.500a5.700 5.700 0 0 1 8 0M4.500 7.500a2.800 2.800 0 0 1 4 0"/><circle cx="6.500" cy="9" r=".6" fill="#333"/></svg>
      <svg class="tray-vol" width="12" height="11" viewBox="0 0 12 11" fill="none" stroke="#333" stroke-width=".9"><path d="M.5 3.500h2L6 .8v9.400L2.500 7.500h-2z"/><path d="M8 3.500a3 3 0 0 1 0 4M10 1.500a6 6 0 0 1 0 8"/></svg>
      <svg class="tray-bat" width="13" height="9" viewBox="0 0 13 9"><rect x="2.500" y="2.500" width="9" height="5.500" fill="#222" stroke="#222"/><rect x="12" y="4" width="1" height="3" fill="#222"/><path d="M1 0v4M3.500 0v3M0 3h4" stroke="#222"/></svg>
      <div class="tray-clock"><div>20:50</div><div>17/12/2025</div></div>
      <div class="tray-badge">1</div>
    </div>
  </footer>

  <script src="https://cdn.jsdelivr.net/npm/bootstrap@5.3.0/dist/js/bootstrap.bundle.min.js"></script>
  <script>
    // cell grid
    const letters = ["B","C","D","E","F","G","H","I","J","K","L","M","N","O","P","Q","R"];
    const profit = ["1,014,729.00","527,884.50","434,890.40","367,122.50","295,377.25","123,360.80"];
    const cost = ["676,486.00","446,671.50","341,699.60","220,273.50","210,983.75","30,840.20"];
    let html = '<div class="cel-corner d-flex align-items-end justify-content-end"><svg width="9" height="9" viewBox="0 0 9 9"><path d="M9 0v9H0z" fill="#b5b5b5"/></svg></div>';
    letters.forEach(l => { html += `<div class="cel cel-head ${l === "O" ? "on" : ""}">${l}</div>`; });
    for (let r = 1; r <= 22; r++) {
      html += `<div class="cel cel-head row-no ${r === 3 ? "row-on" : ""}">${r}</div>`;
      letters.forEach((l, i) => {
        if (r === 3 && i < 2) {
          html += `<div class="cel cel-pivot">${i === 0 ? "Sum of Profit" : "Sum of Cost"}</div>`;
        } else if (r >= 4 && r <= 9 && i < 2) {
          const v = (i === 0 ? profit : cost)[r - 4];
          html += `<div class="cel cel-acc d-flex justify-content-between"><span>$</span><span>${v}</span></div>`;
        } else if (r === 10 && i < 2) {
          html += `<div class="cel cel-total d-flex justify-content-between"><span>$</span><span>${i === 0 ? "2,763,364.45" : "1,926,954.55"}</span></div>`;
        } else {
          html += `<div class="cel ${l === "O" && r === 3 ? "cel-sel" : ""}"></div>`;
        }
      });
    }
    document.getElementById("sheetGrid").innerHTML = html;

    // chart bars: [x, top] pairs measured per product, profit then cost
    const bars = [
      [352, 269, 376.5, 297], [431.5, 309.5, 455.5, 317], [510.5, 317.5, 533.5, 325.5],
      [589.5, 323.5, 612.5, 335], [668.5, 329.5, 692, 336], [747.5, 343.5, 771, 351]
    ];
    let svg = "";
    bars.forEach(b => {
      svg += `<rect x="${b[0]}" y="${b[1]}" width="19" height="${353 - b[1]}" fill="#ab7fc0"/>`;
      svg += `<rect x="${b[2]}" y="${b[3]}" width="19" height="${353 - b[3]}" fill="#8a83c4"/>`;
    });
    document.getElementById("chartBars").innerHTML = svg;
  </script>
</body>
</html>
